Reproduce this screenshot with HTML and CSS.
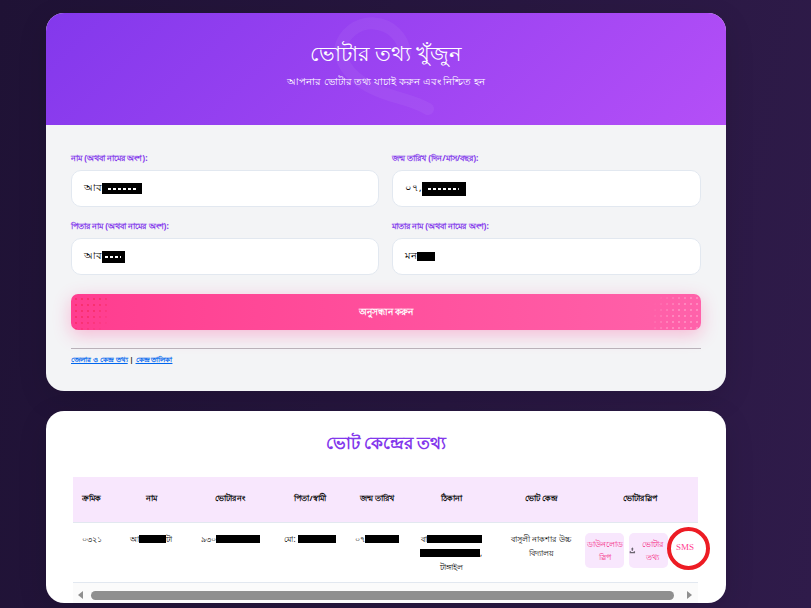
FILE: index.html
```html
<!DOCTYPE html>
<html lang="bn">
<head>
    <meta charset="UTF-8">
    <title>ভোটার তথ্য খুঁজুন</title>
    <link rel="stylesheet" href="styles.css">
</head>
<body>
    <div class="container">
        <div class="card search-card">
            <div class="card-header">
                <svg class="swirl" viewBox="0 0 680 112" width="680" height="112">
                    <path d="M359 40A33 33 0 0 0 294 36C296 62 322 76 350 84Q372 90 382 96" fill="none" stroke="#fff" stroke-opacity="0.05" stroke-width="12" stroke-linecap="round"/>
                </svg>
                <h1>ভোটার তথ্য খুঁজুন</h1>
                <p>আপনার ভোটার তথ্য যাচাই করুন এবং নিশ্চিত হন</p>
            </div>
            <form class="search-form">
                <div class="form-grid">
                    <div class="field">
                        <label>নাম (অথবা নামের অংশ):</label>
                        <div class="input-box">আব<span class="mask mask-a"></span></div>
                    </div>
                    <div class="field">
                        <label>জন্ম তারিখ (দিন/মাস/বছর):</label>
                        <div class="input-box">০৭,<span class="mask mask-b"></span></div>
                    </div>
                    <div class="field">
                        <label>পিতার নাম (অথবা নামের অংশ):</label>
                        <div class="input-box">আব<span class="mask mask-c"></span></div>
                    </div>
                    <div class="field">
                        <label>মাতার নাম (অথবা নামের অংশ):</label>
                        <div class="input-box">মন<span class="mask mask-d"></span></div>
                    </div>
                </div>
                <button type="button" class="search-btn">অনুসন্ধান করুন</button>
                <hr>
                <div class="links"><a href="#">জেলার ও কেন্দ্র তথ্য</a> | <a href="#">কেন্দ্র তালিকা</a></div>
            </form>
        </div>

        <div class="card result-card">
            <h2>ভোট কেন্দ্রের তথ্য</h2>
            <div class="table-wrap">
                <table>
                    <thead>
                        <tr>
                            <th class="col-serial">ক্রমিক</th>
                            <th class="col-name">নাম</th>
                            <th class="col-voter">ভোটার নং</th>
                            <th class="col-father">পিতা/স্বামী</th>
                            <th class="col-dob">জন্ম তারিখ</th>
                            <th class="col-address">ঠিকানা</th>
                            <th class="col-centre">ভোট কেন্দ্র</th>
                            <th class="col-slip">ভোটার স্লিপ</th>
                        </tr>
                    </thead>
                    <tbody>
                        <tr>
                            <td>০৩২১</td>
                            <td>আ<span class="mask mask-name"></span>টা</td>
                            <td>৯৩০<span class="mask mask-voter"></span></td>
                            <td>মো: <span class="mask mask-father"></span></td>
                            <td>০৭<span class="mask mask-dob"></span></td>
                            <td>বা<span class="mask mask-addr"></span><br><span class="mask mask-addr2"></span>,<br>টাঙ্গাইল</td>
                            <td>বাসুলী নাকশার উচ্চ বিদ্যালয়</td>
                            <td class="slip-cell">
                                <div class="slip-actions">
                                    <a href="#" class="slip-btn">ডাউনলোড স্লিপ</a>
                                    <a href="#" class="slip-btn slip-icon">
                                        <svg viewBox="0 0 10 10" width="8" height="8"><path d="M5 1 7 4H6V6H4V4H3zM1 7H3V8H7V7H9V10H1z" fill="#6b6470"/></svg>
                                        <span>ভোটার তথ্য</span>
                                    </a>
                                    <a href="#" class="sms-btn">SMS</a>
                                </div>
                            </td>
                        </tr>
                    </tbody>
                </table>
                <div class="scrollbar">
                    <span class="arrow arrow-left"></span>
                    <span class="thumb"></span>
                    <span class="arrow arrow-right"></span>
                </div>
            </div>
            <div class="sms-mark"></div>
        </div>
    </div>
</body>
</html>
```

FILE: styles.css
```css
* {
    box-sizing: border-box;
}

html, body {
    height: 100%;
}

body {
    margin: 0;
    overflow: hidden;
    font-family: "Noto Sans", "Liberation Sans", sans-serif;
    background: linear-gradient(100deg, #1f1235 0%, #2f1b4a 100%);
}

.container {
    width: 680px;
    margin-left: 46px;
    padding-top: 13px;
}

.card {
    position: relative;
    border-radius: 18px;
    overflow: hidden;
    box-shadow: 0 8px 30px rgba(0,0,0,0.12);
}

.search-card {
    height: 378px;
    background-color: #f3f4f6;
}

.card-header {
    position: relative;
    height: 112px;
    padding-top: 23px;
    overflow: hidden;
    text-align: center;
    color: white;
    background: linear-gradient(135deg, #8338ec 0%, #b44ff7 100%);
}

.card-header h1 {
    position: relative;
    margin: 0;
    font-size: 20.6px;
    line-height: 34px;
    font-weight: 400;
}

.card-header p {
    position: relative;
    margin: 2px 0 0;
    font-size: 10.4px;
    line-height: 18px;
}

.swirl {
    position: absolute;
    left: 0;
    top: 0;
}

.search-form {
    padding: 25px 25px 0;
}

.form-grid {
    display: grid;
    grid-template-columns: 308px 309px;
    column-gap: 13px;
    row-gap: 11px;
}

label {
    display: block;
    height: 15px;
    margin-bottom: 5px;
    font-size: 8.4px;
    line-height: 15px;
    font-weight: 700;
    color: #8338ec;
}

.input-box {
    display: flex;
    align-items: center;
    height: 37px;
    padding: 0 12px;
    font-size: 9.5px;
    background-color: white;
    border: 1px solid #e2e8f0;
    border-radius: 10px;
    color: #000;
}

.mask {
    display: inline-block;
    background-color: black;
    vertical-align: middle;
}

.mask-a, .mask-b, .mask-c {
    background-image: repeating-linear-gradient(90deg, #fff 0 3px, #000 3px 5px);
    background-size: 70% 2px;
    background-position: center;
    background-repeat: no-repeat;
}

.mask-a { width: 40px; height: 11px; }
.mask-b { width: 44px; height: 14px; }
.mask-c { width: 23px; height: 12px; }
.mask-d { width: 18px; height: 9px; }

.search-btn {
    position: relative;
    display: block;
    width: 630px;
    height: 36px;
    margin-top: 19px;
    overflow: hidden;
    border: none;
    border-radius: 7px;
    font-family: inherit;
    font-size: 9px;
    font-weight: 700;
    color: white;
    background: linear-gradient(90deg, #ff3d8f 0%, #ff62aa 100%);
    box-shadow: 0 5px 18px rgba(255,61,143,0.32);
}

.search-btn::before,
.search-btn::after {
    content: "";
    position: absolute;
    width: 38px;
    height: 34px;
    background-size: 6px 6px;
}

.search-btn::before {
    left: 2px;
    top: 2px;
    background-image: radial-gradient(circle, #f0204a 0.6px, transparent 0.8px);
    -webkit-mask-image: radial-gradient(circle at 0 0, #000 50%, transparent 90%);
    mask-image: radial-gradient(circle at 0 0, #000 50%, transparent 90%);
}

.search-btn::after {
    right: 1px;
    bottom: 1px;
    width: 48px;
    background-image: radial-gradient(circle, #ffb4d6 0.6px, transparent 0.8px);
    -webkit-mask-image: radial-gradient(circle at 100% 100%, #000 50%, transparent 90%);
    mask-image: radial-gradient(circle at 100% 100%, #000 50%, transparent 90%);
}

hr {
    height: 1px;
    margin: 18px 0 3px;
    border: none;
    background-color: #b9b4bb;
}

.links {
    font-size: 7.3px;
    line-height: 14px;
    font-weight: 700;
    color: #111;
}

.links a {
    color: #0066ee;
}

.result-card {
    height: 192px;
    margin-top: 20px;
    background-color: white;
}

.result-card h2 {
    margin: 0;
    padding-top: 17px;
    height: 66px;
    text-align: center;
    font-size: 17px;
    line-height: 30px;
    font-weight: 700;
    color: #8338ec;
}

.table-wrap {
    width: 625px;
    margin-left: 27px;
}

table {
    width: 100%;
    border-collapse: collapse;
    table-layout: fixed;
    font-size: 8px;
    color: #000;
}

th {
    height: 45px;
    font-size: 7.5px;
    font-weight: 700;
    background-color: #f8e7fd;
    border-bottom: 1px solid #e2e8f0;
}

td {
    height: 60px;
    padding: 9px 3px 0;
    text-align: center;
    vertical-align: top;
    line-height: 14px;
    border-bottom: 1px solid #e2e8f0;
}

.col-serial { width: 37px; }
.col-name { width: 82px; }
.col-voter { width: 76px; }
.col-father { width: 84px; }
.col-dob { width: 50px; }
.col-address { width: 98px; }
.col-centre { width: 82px; }
.col-slip { width: 116px; }

.mask-name { width: 27px; height: 8px; }
.mask-voter { width: 44px; height: 8px; }
.mask-father { width: 38px; height: 8px; }
.mask-dob { width: 34px; height: 8px; }
.mask-addr { width: 55px; height: 8px; }
.mask-addr2 { width: 60px; height: 8px; }

.slip-actions {
    display: flex;
    gap: 5px;
    margin-top: 1px;
}

.slip-btn {
    display: flex;
    align-items: center;
    justify-content: center;
    gap: 2px;
    width: 39px;
    height: 35px;
    flex: none;
    font-size: 8px;
    line-height: 13px;
    color: #f5267f;
    text-decoration: none;
    background-color: #f8e7fd;
    border-radius: 5px;
}

.sms-btn {
    flex: none;
    margin: 7px 0 0 3px;
    font-size: 9px;
    color: #ff3d8f;
    text-decoration: none;
    font-family: "Liberation Serif", serif;
}

.sms-mark {
    position: absolute;
    left: 621px;
    top: 116px;
    width: 43px;
    height: 43px;
    border: 4px solid #ed1c24;
    border-radius: 50%;
}

.scrollbar {
    display: flex;
    align-items: center;
    height: 20px;
    padding-top: 5px;
    background-color: #fbfbfb;
}

.thumb {
    width: 583px;
    height: 9px;
    margin: 0 13px 0 8px;
    background-color: #8f8f8f;
    border-radius: 5px;
}

.arrow {
    width: 0;
    height: 0;
    border-top: 4px solid transparent;
    border-bottom: 4px solid transparent;
}

.arrow-left {
    margin-left: 5px;
    border-right: 5px solid #8f8f8f;
}

.arrow-right {
    border-left: 5px solid #8f8f8f;
}
```
